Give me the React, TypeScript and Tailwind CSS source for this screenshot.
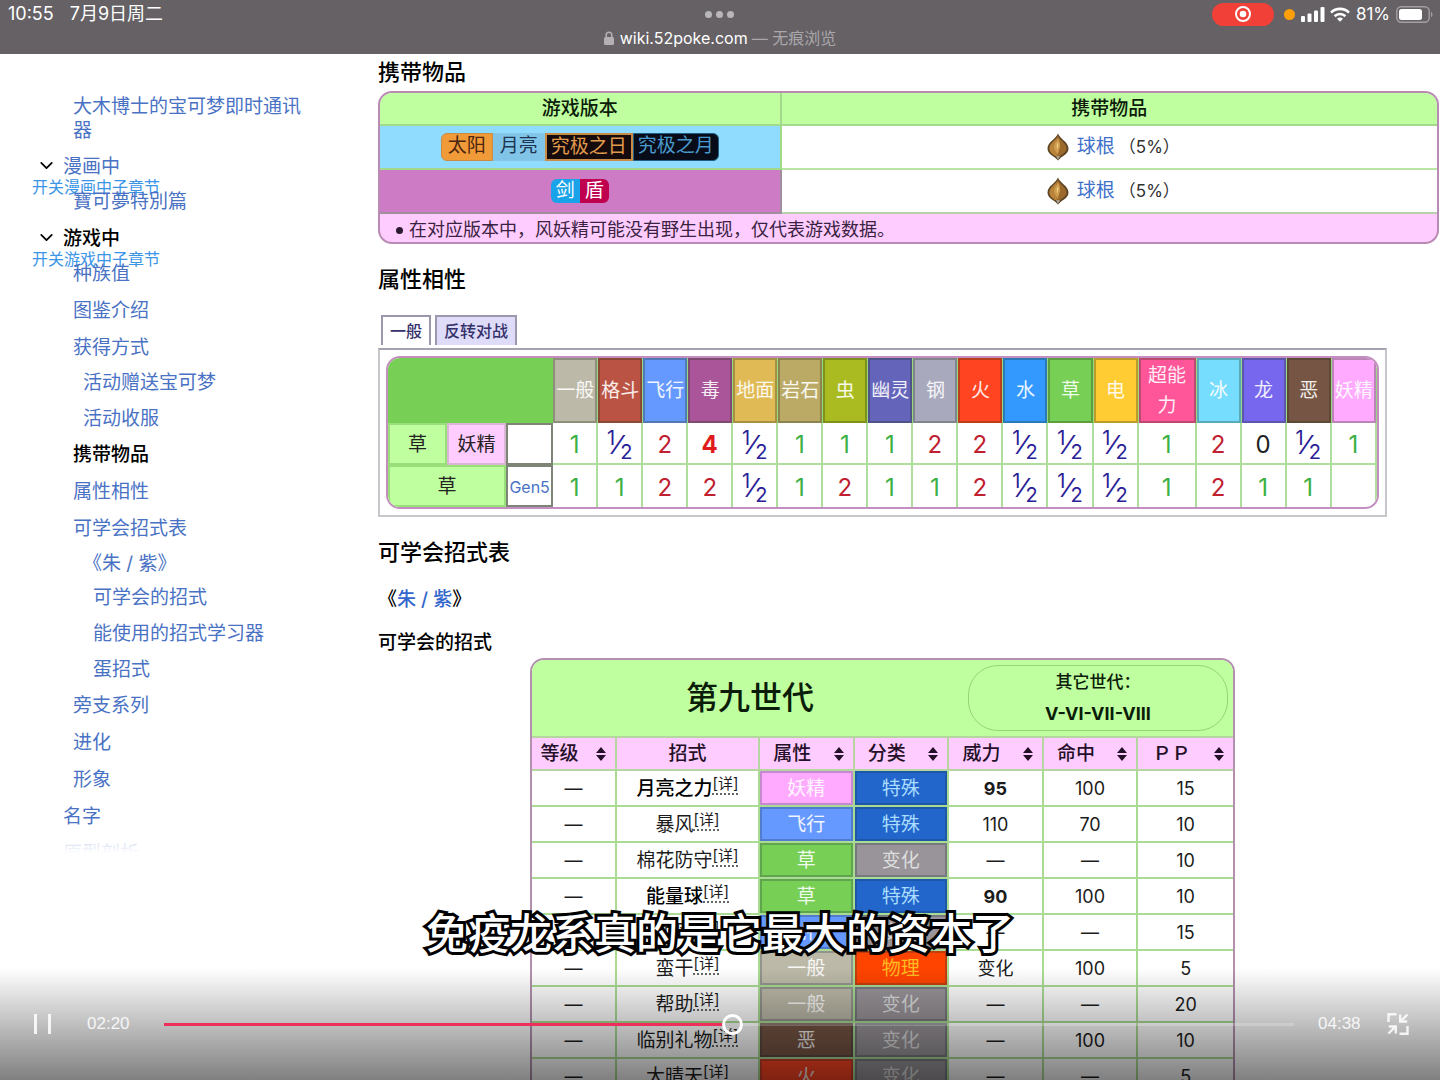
import { useState } from "react";
import { clsx } from "clsx";
import { ChevronDown } from "lucide-react";

type TocItem = {
  label: string;
  bold?: boolean;
  toggle?: string;
  children?: TocItem[];
};

const toc: TocItem[] = [
  {
    label: "漫画中",
    toggle: "开关漫画中子章节",
    children: [{ label: "寶可夢特別篇" }],
  },
  {
    label: "游戏中",
    bold: true,
    toggle: "开关游戏中子章节",
    children: [
      { label: "种族值" },
      { label: "图鉴介绍" },
      {
        label: "获得方式",
        children: [{ label: "活动赠送宝可梦" }, { label: "活动收服" }],
      },
      { label: "携带物品", bold: true },
      { label: "属性相性" },
      {
        label: "可学会招式表",
        children: [
          {
            label: "《朱 / 紫》",
            children: [
              { label: "可学会的招式" },
              { label: "能使用的招式学习器" },
              { label: "蛋招式" },
            ],
          },
        ],
      },
      { label: "旁支系列" },
      { label: "进化" },
      { label: "形象" },
    ],
  },
  { label: "名字" },
  { label: "原型剖析" },
];

const typeColors: Record<string, string> = {
  一般: "bg-[#bcb9a8] text-white/90",
  格斗: "bg-[#bb5344] text-white/90",
  飞行: "bg-[#6699ff] text-white/90",
  毒: "bg-[#aa5599] text-white/90",
  地面: "bg-[#dfba55] text-white/90",
  岩石: "bg-[#bbaa66] text-white/90",
  虫: "bg-[#aabb22] text-white/90",
  幽灵: "bg-[#6464bb] text-white/90",
  钢: "bg-[#a9a9bd] text-white/90",
  火: "bg-[#ff4422] text-white/90",
  水: "bg-[#3399ff] text-white/90",
  草: "bg-[#77cf55] text-white/90",
  电: "bg-[#ffcc33] text-white/90",
  超能力: "bg-[#ff5599] text-white/90",
  冰: "bg-[#77ddff] text-white/90",
  龙: "bg-[#7766ee] text-white/90",
  恶: "bg-[#775544] text-white/90",
  妖精: "bg-[#ffaaff] text-white/90",
};

const categoryColors: Record<string, string> = {
  特殊: "bg-[#2266cc] text-[#aaddff]",
  变化: "bg-[#999499] text-[#dddddd]",
  物理: "bg-[#ff4400] text-[#ffbb22]",
};

const types = Object.keys(typeColors);

const grassFairy = "1 ½ 2 4 ½ 1 1 1 2 2 ½ ½ ½ 1 2 0 ½ 1".split(" ");
const grassOnly = "1 1 2 2 ½ 1 2 1 1 2 ½ ½ ½ 1 2 1 1".split(" ");

type Move = {
  name: string;
  type: string;
  category: string;
  power: string;
  accuracy: string;
  pp: number;
  stab?: boolean;
};

const moves: Move[] = [
  { name: "月亮之力", type: "妖精", category: "特殊", power: "95", accuracy: "100", pp: 15, stab: true },
  { name: "暴风", type: "飞行", category: "特殊", power: "110", accuracy: "70", pp: 10 },
  { name: "棉花防守", type: "草", category: "变化", power: "—", accuracy: "—", pp: 10 },
  { name: "能量球", type: "草", category: "特殊", power: "90", accuracy: "100", pp: 10, stab: true },
  { name: "顺风", type: "飞行", category: "变化", power: "—", accuracy: "—", pp: 15 },
  { name: "蛮干", type: "一般", category: "物理", power: "变化", accuracy: "100", pp: 5 },
  { name: "帮助", type: "一般", category: "变化", power: "—", accuracy: "—", pp: 20 },
  { name: "临别礼物", type: "恶", category: "变化", power: "—", accuracy: "100", pp: 10 },
  { name: "大晴天", type: "火", category: "变化", power: "—", accuracy: "—", pp: 5 },
];

function StatusBar() {
  return (
    <header className="grid h-[54px] shrink-0 grid-cols-[1fr_auto_1fr] bg-[#656165] text-white">
      <div className="flex h-7 items-center gap-4 pl-2 text-[18px] leading-7">
        <span>10:55</span>
        <span>7月9日周二</span>
      </div>

      <div className="flex flex-col items-center">
        <div className="flex h-7 items-center gap-1">
          <i className="size-[7px] rounded-full bg-[#b9b7b9]" />
          <i className="size-[7px] rounded-full bg-[#b9b7b9]" />
          <i className="size-[7px] rounded-full bg-[#b9b7b9]" />
        </div>
        <div className="flex items-center gap-1 text-[16px] leading-5 text-[#aaa7aa]">
          <svg className="mr-0.5" width="10" height="14" viewBox="0 0 10 14" fill="none">
            <rect x="0" y="6" width="10" height="8" rx="1.5" fill="#b4b1b4" />
            <path d="M2.200 7V4a2.800 2.800 0 0 1 5.600 0v3" stroke="#b4b1b4" strokeWidth="1.5" />
          </svg>
          <span className="text-white">wiki.52poke.com</span>
          <span>— 无痕浏览</span>
        </div>
      </div>

      <div className="flex h-7 items-center justify-end pr-[6px]">
        <div className="mr-[10px] flex h-[23px] w-[62px] items-center justify-center rounded-full bg-[#f04037]">
          <svg width="18" height="18" viewBox="0 0 18 18" fill="none">
            <circle cx="9" cy="9" r="7" stroke="#fff" strokeWidth="2" />
            <circle cx="9" cy="9" r="3.3" fill="#fff" />
          </svg>
        </div>
        <i className="mr-[6px] size-[11px] rounded-full bg-[#ff9f0a]" />
        <svg className="mr-[5px]" width="24" height="15" viewBox="0 0 24 15" fill="#fff">
          <rect x="0" y="9" width="4" height="6" rx="1" />
          <rect x="6.5" y="6.5" width="4" height="8.5" rx="1" />
          <rect x="13" y="3.5" width="4" height="11.5" rx="1" />
          <rect x="19.5" y="0" width="4" height="15" rx="1" />
        </svg>
        <svg className="mr-[6px]" width="20" height="15" viewBox="0 0 20 15" fill="none" stroke="#fff" strokeWidth="2.6">
          <path d="M1 5.6a12.8 12.8 0 0 1 18 0" />
          <path d="M4.6 9.2a7.7 7.7 0 0 1 10.8 0" />
          <path d="M10 14.8 7 11.8a4.2 4.2 0 0 1 6 0Z" fill="#fff" stroke="none" />
        </svg>
        <span className="mr-[6px] text-[17px] leading-7">81%</span>
        <svg width="38" height="17" viewBox="0 0 38 17" fill="none">
          <rect x="0.8" y="0.8" width="32.4" height="15.4" rx="4.5" stroke="#a3a0a3" strokeWidth="1.4" />
          <rect x="3" y="3" width="23" height="11" rx="2.5" fill="#fff" />
          <path d="M35 6c2 .6 2 4.400 0 5Z" fill="#a3a0a3" />
        </svg>
      </div>
    </header>
  );
}

function TocList({ items, level }: { items: TocItem[]; level: number }) {
  return (
    <ul className={clsx(level > 1 && "-mt-0.5 pl-[10px]")}>
      {items.map((item) => (
        <li key={item.label}>
          <div className={clsx("relative leading-6", level > 2 ? "pb-3" : "pb-[13px]")}>
            {item.toggle && (
              <button className="absolute top-0 -left-[31px] text-left text-[16px] whitespace-nowrap text-[#3b95e6]">
                <ChevronDown className="ml-1 size-[21px] text-black" strokeWidth={2} />
                <span className="block leading-[22px]">{item.toggle}</span>
              </button>
            )}
            <a
              href="#"
              className={clsx(item.bold ? "font-medium text-black" : "text-[#4a72c4]")}
            >
              {item.label}
            </a>
          </div>
          {item.children && <TocList items={item.children} level={level + 1} />}
        </li>
      ))}
    </ul>
  );
}

function Sidebar() {
  return (
    <nav className="relative max-h-[74vh] w-[378px] shrink-0 overflow-hidden pt-[41px] pl-[63px] text-[19px]">
      <a href="#" className="ml-[10px] block w-[235px] pb-3 leading-6 text-[#4a72c4]">
        大木博士的宝可梦即时通讯器
      </a>
      <TocList items={toc} level={1} />
      <div className="absolute inset-x-0 bottom-0 h-7 bg-gradient-to-b from-white/40 to-white" />
    </nav>
  );
}

function Bulb() {
  return (
    <svg width="22" height="28" viewBox="0 0 22 28">
      <path d="M11 .5C13 6 21.500 9 21.500 15.500c0 5-5 7-8 9.500L11 27.500 8.500 25c-3-2.500-8-4.500-8-9.500C.5 9 9 6 11 .5Z" fill="#5d4523" />
      <path d="M11 2.500c1.500 4.500 8.500 7.500 8.500 13 0 4-4 5.500-6.500 7.500h-4c-2.500-2-6.500-3.500-6.500-7.500 0-5.500 7-8.500 8.500-13Z" fill="#9c692c" />
      <path d="M11 2.500c-2 5.500-3.500 9-1 20.500H8c-2.500-2-5.500-3.500-5.500-7.500 0-5.500 7-8.500 8.500-13Z" fill="#b9833a" />
      <path d="M11 5c1.500 3 3 7 1.500 11-.5 2-1.500 4-2 6-1-3-3-5-3.500-8 .5-4 3-6 4-9Z" fill="#cf9f4f" />
      <path d="M11 9c-1 2.500-1.500 4-1 7 1-2 1.500-4.500 1-7Z" fill="#f3d78e" />
      <path d="M9 23h4l-2 4Z" fill="#aaa294" />
    </svg>
  );
}

function HeldItem() {
  return (
    <div className="flex items-center justify-center pl-2">
      <Bulb />
      <a href="#" className="ml-2 text-[#3e70c9]">
        球根
      </a>
      <span className="ml-1 text-[17px]">（5%）</span>
    </div>
  );
}

function HeldItems() {
  return (
    <div className="mt-1 mr-px overflow-hidden rounded-[14px] border-2 border-[#b98bb4] bg-[#ffccff]">
      <table className="w-full table-fixed border-separate border-spacing-0 text-center text-[19px] leading-6 text-[#303030]">
        <thead className="bg-[#bfff9f] text-[#0b1c08]">
          <tr className="h-[33px]">
            <th className="w-[38%] border-r-2 border-b-2 border-[#a3d98a] font-medium">游戏版本</th>
            <th className="border-b-2 border-[#a3d98a] font-medium">携带物品</th>
          </tr>
        </thead>
        <tbody>
          <tr className="h-11">
            <td className="border-r-2 border-b-2 border-[#a3d98a] bg-[#8fdcff]">
              <div className="flex justify-center">
                <span className="rounded-l-md border border-[#c88a45] bg-[#f19a38] px-1.5 text-[#4a2610]">太阳</span>
                <span className="border border-[#84c6e6] bg-[#80c5e8] px-1.5 text-[#1d3552]">月亮</span>
                <span className="border-2 border-[#c88a45] bg-[#150a0c] px-1 text-[#e29b4c]">究极之日</span>
                <span className="rounded-r-md border border-[#1f5f86] bg-[#080c18] px-1 text-[#4a9bcd]">究极之月</span>
              </div>
            </td>
            <td className="border-b-2 border-[#b9e6a4] bg-white">
              <HeldItem />
            </td>
          </tr>
          <tr className="h-11">
            <td className="border-r-2 border-b-2 border-[#a08f9c] bg-[#ce7bc6]">
              <div className="flex justify-center">
                <span className="rounded-l-md bg-[#1aa3e8] px-[5px] text-white">剑</span>
                <span className="rounded-r-md bg-[#bf004f] px-[5px] text-white">盾</span>
              </div>
            </td>
            <td className="border-b-2 border-[#b9cfae] bg-white">
              <HeldItem />
            </td>
          </tr>
          <tr className="h-7">
            <td colSpan={2} className="pt-1 pl-4 text-left text-[#3a2340]">
              <div className="flex items-center gap-1.5 text-[18px]">
                <i className="size-[7px] rounded-full bg-[#2c1a30]" />
                在对应版本中，风妖精可能没有野生出现，仅代表游戏数据。
              </div>
            </td>
          </tr>
        </tbody>
      </table>
    </div>
  );
}

function Effect({ value }: { value?: string }) {
  if (value === "½") {
    return (
      <span className="inline-flex h-[34px] items-center align-middle text-[20px] leading-5 text-[#2a2196]">
        <span className="self-start">1</span>
        <span className="text-[26px]">⁄</span>
        <span className="self-end">2</span>
      </span>
    );
  }
  return (
    <span
      className={clsx(
        value === "1" && "text-[#3cb043]",
        value === "2" && "text-[#c0202f]",
        value === "4" && "font-bold text-[#e01b1b]",
      )}
    >
      {value}
    </span>
  );
}

function TypeChart() {
  return (
    <div className="w-[95%]">
      <div className="mt-[21px] mb-[3px] flex gap-1 pl-[3px] text-[16px] font-medium text-[#35316b]">
        <button className="h-[30px] border-2 border-b-0 border-[#9b98ad] bg-white px-[7px]">一般</button>
        <button className="h-[30px] border-2 border-b-0 border-[#9b98ad] bg-[#dedcf8] px-[7px]">反转对战</button>
      </div>
      <div className="border-2 border-[#c6c6cb] border-t-[#a5a3b0] p-1.5">
        <div className="overflow-hidden rounded-[14px] border-2 border-[#c48fc0]">
          <table className="w-full table-fixed border-separate border-spacing-0 text-center text-[19px] leading-[30px] text-[#222]">
            <colgroup>
              <col className="w-[59px]" />
              <col className="w-[59px]" />
              <col className="w-[47px]" />
              {types.map((t) => (
                <col key={t} className={t === "超能力" ? "w-[58px]" : "w-[45px]"} />
              ))}
            </colgroup>
            <thead>
              <tr className="h-[65px]">
                <td colSpan={3} className="bg-[#77cf55]" />
                {types.map((t) => (
                  <th
                    key={t}
                    className={clsx(
                      "border-r border-[#9ad783] p-0 font-normal shadow-[inset_0_0_0_2px_rgba(30,50,20,0.3)]",
                      t === "超能力" ? "px-2" : "whitespace-nowrap",
                      typeColors[t],
                    )}
                  >
                    {t}
                  </th>
                ))}
              </tr>
            </thead>
            <tbody className="text-[24px]">
              <tr className="h-[42px]">
                <th className="border-2 border-[#98df7a] bg-[#bfff9f] px-0 pt-0.5 text-[19px] font-normal">草</th>
                <th className="border-2 border-[#d9b6d4] bg-[#ffccff] px-0 pt-0.5 text-[19px] font-normal">妖精</th>
                <td className="border-2 border-[#7d8576]" />
                {types.map((t, i) => (
                  <td key={t} className="border-r-2 border-b-2 border-[#aedd9c] px-0 pt-1">
                    <Effect value={grassFairy[i]} />
                  </td>
                ))}
              </tr>
              <tr className="h-[42px]">
                <th colSpan={2} className="border-2 border-[#98df7a] bg-[#bfff9f] px-0 pt-0.5 text-[19px] font-normal">
                  草
                </th>
                <td className="border-2 border-[#7d8576] px-0 pt-0.5 text-[16px] text-[#4a72c4]">
                  <a href="#">Gen5</a>
                </td>
                {types.map((t, i) => (
                  <td key={t} className="border-r-2 border-[#aedd9c] px-0 pt-1">
                    <Effect value={grassOnly[i]} />
                  </td>
                ))}
              </tr>
            </tbody>
          </table>
        </div>
      </div>
    </div>
  );
}

function SortHeader({ label }: { label: string }) {
  return (
    <th className="border-r-2 border-b-2 border-[#b5d6a0] p-0 last:border-r-0">
      <button className="flex w-full items-center font-medium">
        <span className="flex-1 text-center">{label}</span>
        <svg className="mx-2 shrink-0" width="12" height="14" viewBox="0 0 12 14" fill="#241028">
          <path d="M6 0 11 6H1ZM6 14 1 8h10Z" />
        </svg>
      </button>
    </th>
  );
}

function MoveTable() {
  const cell = "border-r-2 border-b-2 border-[#a9dc92] px-0 pt-0.5 last:border-r-0";
  const tinted = "shadow-[inset_0_0_0_2px_rgba(20,40,60,0.25)]";

  return (
    <div className="mx-auto mt-[3px] w-[705px] overflow-hidden rounded-[14px] border-2 border-[#b390ae]">
      <table className="w-full table-fixed border-separate border-spacing-0 text-center text-[18px] leading-6 text-[#1c1c1c]">
        <colgroup>
          <col className="w-[85px]" />
          <col className="w-[143px]" />
          <col />
          <col />
          <col />
          <col />
          <col />
        </colgroup>
        <thead>
          <tr className="h-[78px] bg-[#bfff9f] text-[#0b1c08]">
            <th colSpan={7} className="border-b-2 border-[#b5d6a0] p-0 font-medium">
              <div className="flex items-center pr-[5px]">
                <span className="flex-1 text-[32px]">第九世代</span>
                <div className="w-[260px] rounded-[30px] border border-[#93d476] leading-8">
                  <div className="text-[17px]">其它世代：</div>
                  <div className="font-bold">V-VI-VII-VIII</div>
                </div>
              </div>
            </th>
          </tr>
          <tr className="h-[33px] bg-[#ffccff] text-[19px] text-[#241028]">
            <SortHeader label="等级" />
            <th className="border-r-2 border-b-2 border-[#b5d6a0] p-0 font-medium">招式</th>
            <SortHeader label="属性" />
            <SortHeader label="分类" />
            <SortHeader label="威力" />
            <SortHeader label="命中" />
            <SortHeader label="ＰＰ" />
          </tr>
        </thead>
        <tbody>
          {moves.map((move) => (
            <tr key={move.name} className="h-9">
              <td className={cell}>—</td>
              <td className={clsx(cell, "whitespace-nowrap text-[19px]")}>
                <span className={clsx(move.stab && "font-medium text-black")}>{move.name}</span>
                <sup className="-top-1.5 border-b-2 border-dotted border-[#666] align-baseline text-[15px] leading-4">
                  [详]
                </sup>
              </td>
              <td className={clsx(cell, tinted, "text-[19px]", typeColors[move.type])}>{move.type}</td>
              <td className={clsx(cell, tinted, "text-[19px]", categoryColors[move.category])}>{move.category}</td>
              <td className={clsx(cell, move.stab && "font-bold")}>{move.power}</td>
              <td className={cell}>{move.accuracy}</td>
              <td className={cell}>{move.pp}</td>
            </tr>
          ))}
        </tbody>
      </table>
    </div>
  );
}

function Player() {
  const duration = 278;
  const [time, setTime] = useState(140);
  const format = (s: number) =>
    `${String(Math.floor(s / 60)).padStart(2, "0")}:${String(s % 60).padStart(2, "0")}`;

  const pos = (time / duration) * 100;
  const track = `linear-gradient(to right, #ee2f5b calc(${pos}% - 10px), transparent calc(${pos}% - 10px), transparent calc(${pos}% + 10px), rgba(255,255,255,0.2) calc(${pos}% + 10px))`;

  return (
    <div className="absolute inset-x-0 bottom-0 flex h-[112px] items-center bg-gradient-to-b from-black/0 to-black/50 px-[31px] font-['Liberation_Sans',sans-serif] text-[17px] text-white/85">
      <button aria-label="暂停" className="flex w-[56px] gap-[11px] pl-[3px]">
        <i className="h-5 w-[3px] bg-white/85" />
        <i className="h-5 w-[3px] bg-white/85" />
      </button>
      <span className="w-[77px]">{format(time)}</span>
      <input
        type="range"
        aria-label="播放进度"
        min={0}
        max={duration}
        value={time}
        onChange={(e) => setTime(Number(e.target.value))}
        style={{ backgroundImage: track }}
        className="h-[3px] min-w-0 flex-1 appearance-none [&::-webkit-slider-thumb]:size-[21px] [&::-webkit-slider-thumb]:appearance-none [&::-webkit-slider-thumb]:rounded-full [&::-webkit-slider-thumb]:border-3 [&::-webkit-slider-thumb]:border-white [&::-webkit-slider-thumb]:bg-transparent"
      />
      <span className="ml-6 w-[69px]">{format(duration)}</span>
      <button aria-label="退出全屏">
        <svg width="22" height="22" viewBox="0 0 22 22" fill="none" stroke="#fff" strokeOpacity="0.85" strokeWidth="2.400">
          <path d="M1.500 9V1.200H9.500M20.500 13v7.800h-8" />
          <path d="M20.500 1.500 14 8M13.200 1.500v7h7" />
          <path d="M1.500 20.500 8 14M8.800 20.500v-7h-7" />
        </svg>
      </button>
    </div>
  );
}

export default function App() {
  return (
    <div className="relative flex h-screen flex-col overflow-hidden bg-white font-['Inter','Noto_Sans_CJK_SC',sans-serif] text-[#202122]">
      <StatusBar />

      <div className="flex min-h-0 flex-1 items-start">
        <Sidebar />
        <main className="min-w-0 flex-1 pt-[3px]">
          <h3 className="text-[22px] leading-[30px] font-medium text-black">携带物品</h3>
          <HeldItems />

          <h3 className="mt-5 text-[22px] leading-[30px] font-medium text-black">属性相性</h3>
          <TypeChart />

          <h3 className="mt-5 text-[22px] leading-[30px] font-medium text-black">可学会招式表</h3>
          <h4 className="mt-[21px] text-[19px] leading-6 font-medium text-black">
            《
            <a href="#" className="text-[#3366cc]">
              朱 / 紫
            </a>
            》
          </h4>
          <h5 className="mt-[19px] text-[19px] leading-6 font-medium text-black">可学会的招式</h5>
          <div className="w-[95%]">
            <MoveTable />
          </div>
        </main>
      </div>

      {/* Video overlay */}
      <Player />
      <p className="absolute inset-x-0 bottom-[116px] text-center text-[42px] leading-[60px] font-medium text-white [paint-order:stroke_fill] [-webkit-text-stroke:6px_#000]">
        免疫龙系真的是它最大的资本了
      </p>
    </div>
  );
}
